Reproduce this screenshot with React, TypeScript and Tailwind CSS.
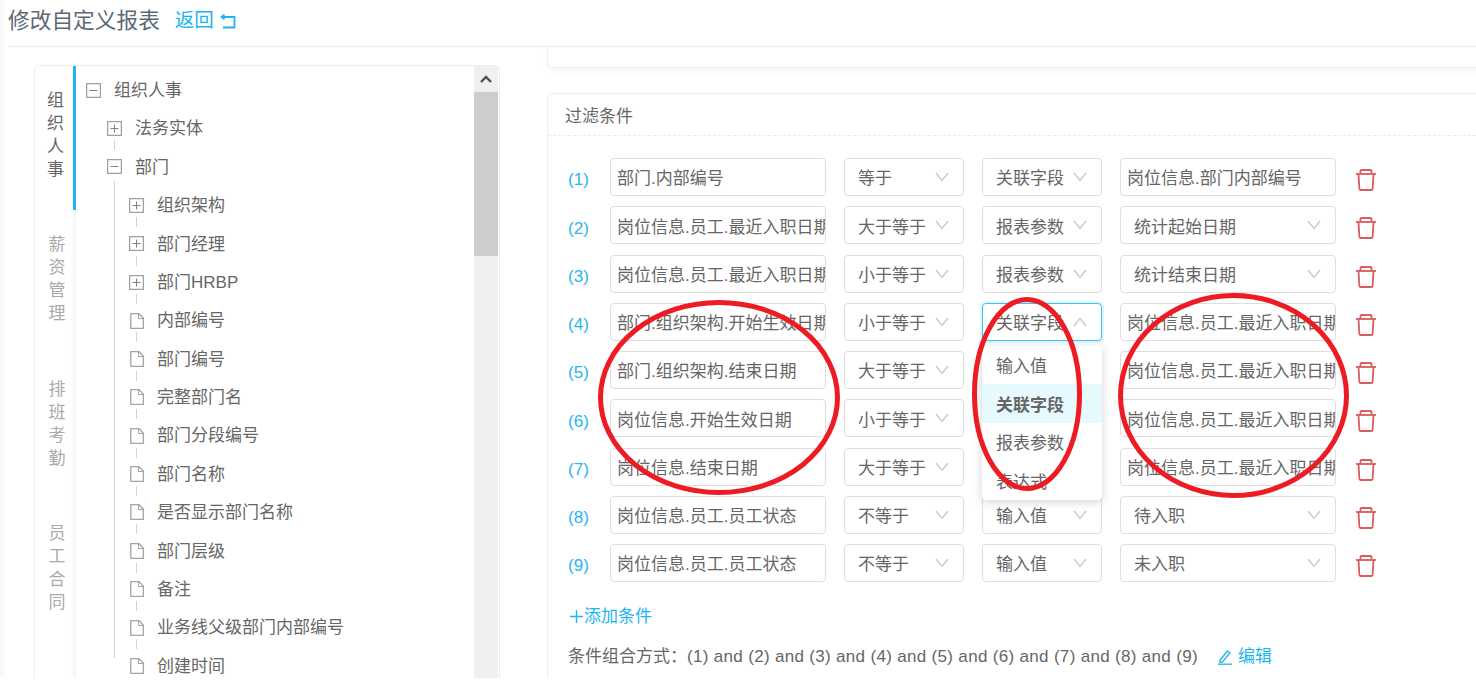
const BLUE = "#1cb5ef";

type Cond = {
  field: string;
  op: string;
  kind: string;
  value: string;
  select?: boolean;
  open?: boolean;
};

// rows 5-7 sit under the open dropdown, their kind can't be seen
const conds: Cond[] = [
  { field: "部门.内部编号", op: "等于", kind: "关联字段", value: "岗位信息.部门内部编号" },
  { field: "岗位信息.员工.最近入职日期", op: "大于等于", kind: "报表参数", value: "统计起始日期", select: true },
  { field: "岗位信息.员工.最近入职日期", op: "小于等于", kind: "报表参数", value: "统计结束日期", select: true },
  { field: "部门.组织架构.开始生效日期", op: "小于等于", kind: "关联字段", value: "岗位信息.员工.最近入职日期", open: true },
  { field: "部门.组织架构.结束日期", op: "大于等于", kind: "", value: "岗位信息.员工.最近入职日期" },
  { field: "岗位信息.开始生效日期", op: "小于等于", kind: "", value: "岗位信息.员工.最近入职日期" },
  { field: "岗位信息.结束日期", op: "大于等于", kind: "", value: "岗位信息.员工.最近入职日期" },
  { field: "岗位信息.员工.员工状态", op: "不等于", kind: "输入值", value: "待入职", select: true },
  { field: "岗位信息.员工.员工状态", op: "不等于", kind: "输入值", value: "未入职", select: true },
];

const tabs = [
  { label: "组织人事", active: true },
  { label: "薪资管理" },
  { label: "排班考勤" },
  { label: "员工合同" },
];

const leaves = [
  "内部编号",
  "部门编号",
  "完整部门名",
  "部门分段编号",
  "部门名称",
  "是否显示部门名称",
  "部门层级",
  "备注",
  "业务线父级部门内部编号",
  "创建时间",
];

function Chevron({ up }: { up?: boolean }) {
  return (
    <svg width="14" height="10" viewBox="0 0 14 10" fill="none" stroke="#c8c8c8" strokeWidth="1.3" className="shrink-0">
      <path d={up ? "M1 9 L7 1.5 L13 9" : "M1 1 L7 8.5 L13 1"} />
    </svg>
  );
}

function Trash() {
  return (
    <svg width="20" height="22" viewBox="0 0 20 22" fill="none" stroke="#dd5a5a" strokeWidth="1.8" className="shrink-0">
      <path d="M0 5 H20" />
      <path d="M4.5 5 V2 Q4.5 1 5.5 1 H14.5 Q15.5 1 15.5 2 V5" />
      <path d="M2.5 5 L3.4 20 Q3.5 21 4.5 21 H15.5 Q16.5 21 16.6 20 L17.5 5" />
    </svg>
  );
}

function BoxIcon({ plus }: { plus?: boolean }) {
  return (
    <svg width="15" height="15" viewBox="0 0 15 15" fill="none" stroke="#a0a0a0" strokeWidth="1.3" className="shrink-0">
      <rect x="0.6" y="0.6" width="13.8" height="13.8" />
      <path d="M3.5 7.5 H11.5" stroke="#808080" strokeWidth="1" />
      {plus && <path d="M7.5 3.5 V11.5" stroke="#808080" strokeWidth="1" />}
    </svg>
  );
}

function FileIcon() {
  return (
    <svg width="14" height="16" viewBox="0 0 14 16" fill="none" stroke="#a4a4a4" strokeWidth="1.3" className="shrink-0">
      <path d="M0.8 0.7 H9 L13.3 5 V15.3 H0.8 Z" />
      <path d="M8.5 0.7 V5.5 H13.3" strokeWidth="1" />
    </svg>
  );
}

function TreeRow({ icon, label, tick }: { icon: React.ReactNode; label: string; tick?: boolean }) {
  return (
    <div className="relative flex h-[38.4px] items-center">
      <div className="flex w-[15px] justify-center">{icon}</div>
      <span className="ml-[13px] whitespace-nowrap pt-px">{label}</span>
      {tick && <div className="absolute left-[7px] top-[31px] h-[10px] w-px bg-[#d4d4d4]" />}
    </div>
  );
}

function Tree() {
  return (
    <div className="min-w-0 flex-1 overflow-hidden bg-white pl-[10px] pt-[5px] text-[17px] text-[#666]">
      <TreeRow icon={<BoxIcon />} label="组织人事" />
      <div className="ml-[21px]">
        <TreeRow icon={<BoxIcon plus />} label="法务实体" tick />
        <TreeRow icon={<BoxIcon />} label="部门" />
        <div className="-mt-[5px] ml-[7px] h-[477px] border-l border-[#d4d4d4] pl-[14px] pt-[5px]">
          <TreeRow icon={<BoxIcon plus />} label="组织架构" tick />
          <TreeRow icon={<BoxIcon plus />} label="部门经理" tick />
          <TreeRow icon={<BoxIcon plus />} label="部门HRBP" tick />
          {leaves.map((l, i) => (
            <TreeRow key={l} icon={<FileIcon />} label={l} tick={i < leaves.length - 1} />
          ))}
        </div>
      </div>
    </div>
  );
}

function Scrollbar() {
  return (
    <div className="mr-px flex w-[24px] shrink-0 flex-col bg-[#f0f0f0]">
      <div className="flex h-[26px] items-center justify-center">
        <svg width="12" height="8" viewBox="0 0 12 8" fill="none" stroke="#505050" strokeWidth="2.4">
          <path d="M1 7 L6 2 L11 7" />
        </svg>
      </div>
      <div className="h-[164px] bg-[#cdcdcd]" />
    </div>
  );
}

function SelectBox({ label, width, open }: { label: string; width: string; open?: boolean }) {
  return (
    <div
      className={`flex h-[38px] shrink-0 items-center justify-between rounded border pl-[13px] pr-[14px] ${width} ${
        open ? "border-[#3cc4f0] shadow-[0_0_0_2px_#dff5fc]" : "border-[#dedede]"
      }`}
    >
      <span className="whitespace-nowrap pt-[4px]">{label}</span>
      <Chevron up={open} />
    </div>
  );
}

function TextBox({ value, width }: { value: string; width: string }) {
  return (
    <div className={`flex h-[38px] shrink-0 items-center overflow-hidden whitespace-nowrap rounded border border-[#dedede] pl-[6px] pr-[1px] pt-[4px] ${width}`}>
      {value}
    </div>
  );
}

function Dropdown() {
  const items = ["输入值", "关联字段", "报表参数", "表达式"];
  return (
    <div className="absolute left-0 top-[43px] z-10 w-[120px] rounded-b bg-white shadow-[0_2px_10px_rgba(0,0,0,0.18)]">
      {items.map((it, i) => (
        <div
          key={it}
          className={`flex h-[38.5px] items-center pl-[14px] pt-[4px] ${i === 1 ? "bg-[#e6f9fe] font-bold" : ""}`}
        >
          {it}
        </div>
      ))}
    </div>
  );
}

function CondRow({ c, n }: { c: Cond; n: number }) {
  return (
    <div className="flex h-[38px] items-center">
      <span className="w-[42px] shrink-0 pt-[6px] text-[#2ab4f0]">({n})</span>
      <TextBox value={c.field} width="w-[216px]" />
      <div className="ml-[18px]">
        <SelectBox label={c.op} width="w-[120px]" />
      </div>
      <div className="relative ml-[18px]">
        <SelectBox label={c.kind} width="w-[120px]" open={c.open} />
        {c.open && <Dropdown />}
      </div>
      <div className="ml-[18px]">
        {c.select ? <SelectBox label={c.value} width="w-[216px]" /> : <TextBox value={c.value} width="w-[216px]" />}
      </div>
      <div className="ml-[20px] pt-[6px]">
        <Trash />
      </div>
    </div>
  );
}

export default function App() {
  const combo = conds.map((_, i) => `(${i + 1})`).join(" and ");
  return (
    <div className="relative h-[687px] overflow-hidden bg-white text-[17px] text-[#666] [font-family:'Liberation_Sans','Noto_Sans_CJK_SC',sans-serif]">
      <div className="h-[678px] overflow-hidden shadow-[inset_7px_0_6px_-5px_rgba(0,0,0,0.05)]">
        <header className="ml-[8px] flex h-[47px] items-center border-b border-[#eeeeee] pb-[4px]">
          <h1 className="text-[21.7px] font-normal text-[#5c6873]">修改自定义报表</h1>
          <span className="ml-[15px] text-[19.5px]" style={{ color: BLUE }}>
            返回
          </span>
          <svg width="16" height="15" viewBox="0 0 16 15" fill="none" stroke={BLUE} strokeWidth="1.8" className="ml-[6px]">
            <path d="M1 3 H14.5 V13.5 H3" />
            <path d="M4.5 0.7 L1.5 3 L4.5 5.3" />
          </svg>
        </header>

        <main className="flex">
          <div className="ml-[34px] mt-[18px] flex h-[640px] w-[466px] shrink-0 overflow-hidden rounded-t border border-[#eeeeee]">
            <nav className="flex w-[41px] shrink-0 flex-col">
              {tabs.map((t) => (
                <div
                  key={t.label}
                  className={`flex h-[144.3px] shrink-0 flex-col items-center pl-[3px] pt-[23px] leading-[23px] ${
                    t.active
                      ? "border-r-[3px] border-[#1cb5ef] text-[#666]"
                      : "text-[#aaa] shadow-[inset_-5px_0_5px_-4px_rgba(0,0,0,0.08)]"
                  }`}
                >
                  {t.label.split("").map((ch) => (
                    <span key={ch}>{ch}</span>
                  ))}
                </div>
              ))}
              <div className="flex-1 shadow-[inset_-5px_0_5px_-4px_rgba(0,0,0,0.08)]" />
            </nav>
            <Tree />
            <Scrollbar />
          </div>

          <section className="ml-[47px] w-[940px] shrink-0">
            <div className="h-[21px] rounded-b-md border-b border-l border-[#eeeeee] shadow-[0_4px_10px_rgba(0,0,0,0.03)]" />
            <div className="mt-[25px] h-[640px] rounded-t-md border border-[#eeeeee]">
              <div className="flex h-[42px] items-center border-b border-dashed border-[#eaeaea] pl-[17px] pt-[4px]">过滤条件</div>
              <div className="flex flex-col gap-[10.25px] pl-[20px] pt-[22px]">
                {conds.map((c, i) => (
                  <CondRow key={i} c={c} n={i + 1} />
                ))}
              </div>
              <div className="mt-[22px] flex items-center pl-[21px]" style={{ color: BLUE }}>
                <svg width="15" height="15" viewBox="0 0 15 15" stroke={BLUE} strokeWidth="1.4">
                  <path d="M7.5 1 V14 M1 7.5 H14" />
                </svg>
                <span>添加条件</span>
              </div>
              <div className="mt-[15px] flex h-[24px] items-center whitespace-nowrap pl-[20px]">
                <span>条件组合方式：</span>
                <span className="tracking-[0.32px]">{combo}</span>
                <svg width="16" height="16" viewBox="0 0 16 16" fill="none" stroke={BLUE} strokeWidth="1.3" className="ml-[19px]">
                  <path d="M3 11 L10.5 2 L13 4 L5.5 13 L3 13.5 Z" />
                  <path d="M1 15.2 H15" />
                </svg>
                <span className="ml-[5px]" style={{ color: BLUE }}>
                  编辑
                </span>
              </div>
            </div>
          </section>
        </main>
      </div>

      {/* hand drawn marks on top of the screenshot */}
      <svg className="pointer-events-none absolute inset-0 z-20" width="1476" height="687" fill="none" stroke="#ed1c24" strokeWidth="5">
        <ellipse cx="719" cy="397.5" rx="118.5" ry="95" />
        <ellipse cx="1027" cy="394" rx="52.5" ry="94.5" />
        <ellipse cx="1233.5" cy="395.5" rx="113" ry="100" />
      </svg>
    </div>
  );
}
